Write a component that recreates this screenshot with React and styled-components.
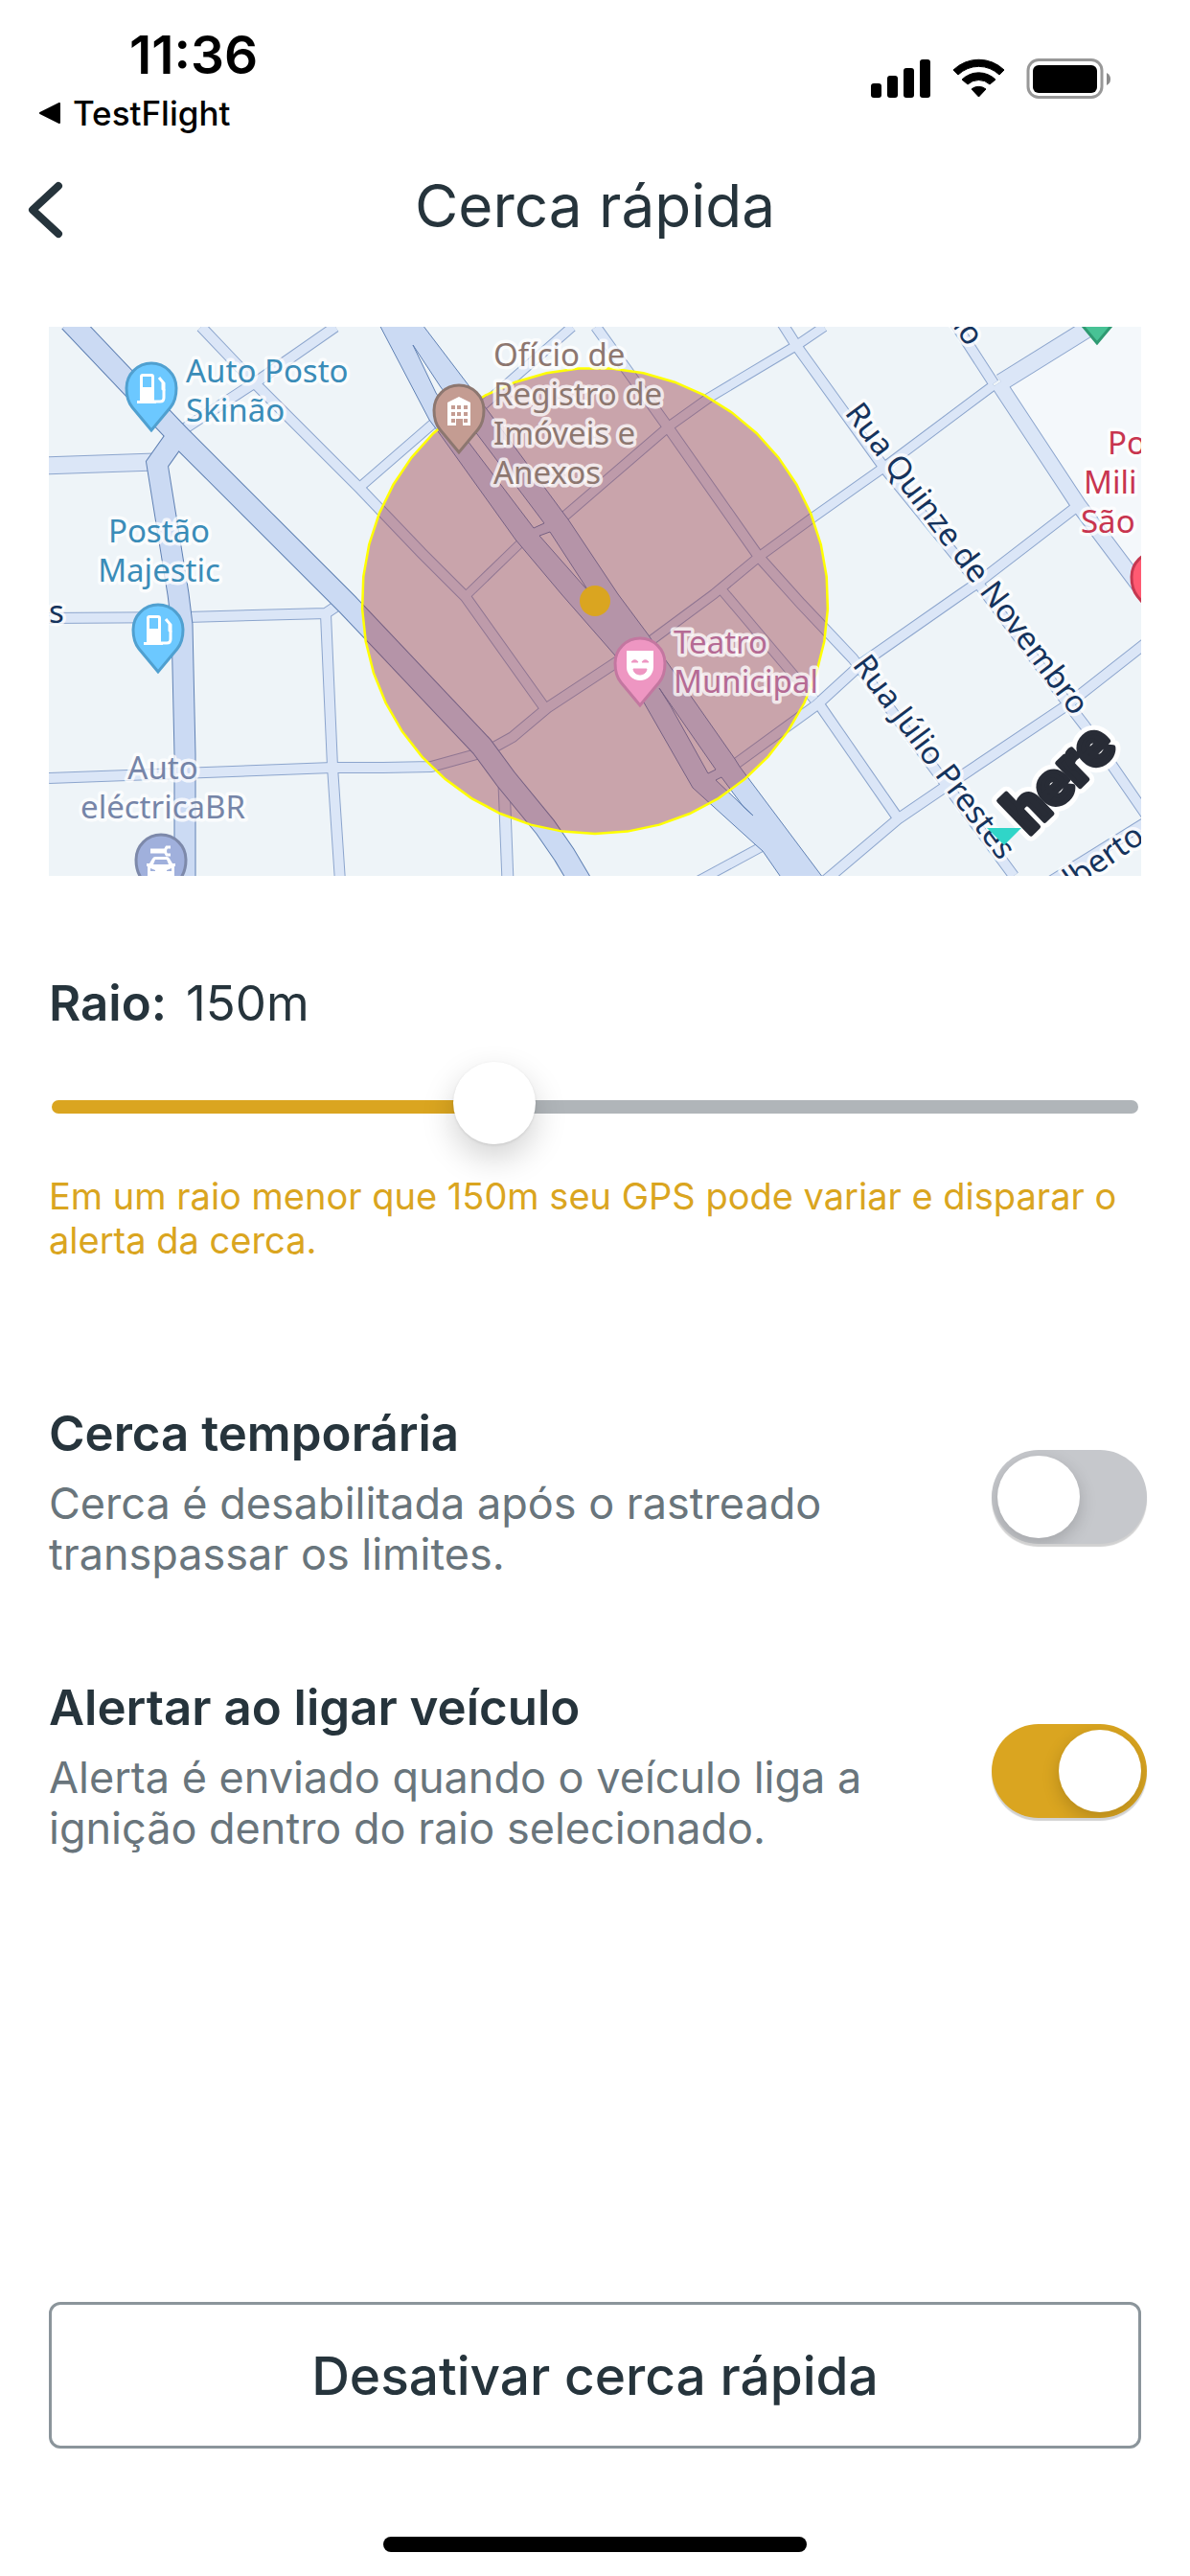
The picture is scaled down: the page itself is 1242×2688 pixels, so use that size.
import React, { useState } from "react";
import styled, { createGlobalStyle } from "styled-components";

const ink = "#26343c";
const gold = "#daa520";
const sans = `Inter, "Liberation Sans", sans-serif`;

const GlobalStyle = createGlobalStyle`
  * { box-sizing: border-box; }
  body { margin: 0; background: #fff; color: ${ink}; font-family: ${sans}; }
`;

const Screen = styled.div`
  display: flex;
  flex-direction: column;
  min-height: 100vh;
  padding-bottom: 25px;
`;

const StatusBar = styled.header`
  display: flex;
  justify-content: space-between;
  padding: 25px 83px 0 40px;
  color: #000;
`;

const StatusLeft = styled.div`
  display: flex;
  flex-direction: column;
  gap: 9px;
`;

const Clock = styled.time`
  padding-left: 95px;
  font-size: 55px;
  line-height: 64px;
  font-weight: 600;
`;

const ReturnLink = styled.a`
  display: flex;
  align-items: center;
  gap: 12px;
  color: inherit;
  font-size: 35px;
  line-height: 40px;
  font-weight: 500;
  text-decoration: none;
`;

const StatusIcons = styled.svg`
  width: 250px;
  height: 42px;
  margin-top: 36px;
`;

const NavBar = styled.nav`
  display: grid;
  grid-template-columns: 96px 1fr 96px;
  margin-top: 37px;
`;

const BackButton = styled.button`
  display: flex;
  align-items: center;
  align-self: end;
  height: 72px;
  padding: 0 0 0 28px;
  border: 0;
  background: none;
  color: ${ink};
`;

const Title = styled.h1`
  margin: 0;
  font-size: 62px;
  line-height: 80px;
  font-weight: 400;
  text-align: center;
`;

const Content = styled.main`
  display: flex;
  flex: 1;
  flex-direction: column;
  padding: 86px 51px 0;
`;

const MapView = styled.svg`
  display: block;
  width: 100%;
  height: auto;
  background: #eef4f8;
  font-family: "Noto Sans", "Open Sans", sans-serif;
`;

const RadiusField = styled.section`
  display: flex;
  flex-direction: column;
  margin-top: 101px;
`;

const RadiusLine = styled.div`
  display: flex;
  gap: 20px;
  margin-bottom: 29px;
  font-size: 51px;
  line-height: 64px;
`;

const RadiusLabel = styled.label`
  font-weight: 600;
`;

const Range = styled.input`
  appearance: none;
  height: 94px;
  margin: 0 3px;
  background: none;

  &::-webkit-slider-runnable-track {
    height: 14px;
    border-radius: 7px;
    background: linear-gradient(to right, ${gold} var(--filled), #b0b5b9 var(--filled));
  }

  &::-webkit-slider-thumb {
    appearance: none;
    width: 86px;
    height: 86px;
    margin-top: -40px;
    border-radius: 50%;
    background: #fff;
    box-shadow: 0 1px 3px rgba(0, 0, 0, 0.1), 0 14px 34px rgba(0, 0, 0, 0.18);
  }
`;

const Hint = styled.p`
  margin: 23px 0 0;
  color: ${gold};
  font-size: 38px;
  line-height: 46px;
`;

const Options = styled.section`
  display: flex;
  flex-direction: column;
  gap: 104px;
  margin: 149px -6px 80px 0;
`;

const Option = styled.div`
  display: flex;
  align-items: center;
  justify-content: space-between;
`;

const OptionText = styled.div`
  display: flex;
  flex-direction: column;
  gap: 16px;
  max-width: 860px;
`;

const OptionLabel = styled.label`
  font-size: 51px;
  line-height: 60px;
  font-weight: 600;
`;

const OptionNote = styled.p`
  margin: 0;
  color: #69757c;
  font-size: 45px;
  line-height: 53px;
`;

const Switch = styled.input`
  appearance: none;
  display: flex;
  flex-shrink: 0;
  width: 162px;
  height: 98px;
  margin: 10px 0 0;
  padding: 6px;
  overflow: hidden;
  border-radius: 49px;
  background: #c6c8cc;
  box-shadow: 0 3px 1px rgba(0, 0, 0, 0.18);

  &::before {
    content: "";
    width: 86px;
    height: 86px;
    border-radius: 50%;
    background: #fff;
    box-shadow: 0 6px 18px rgba(0, 0, 0, 0.18);
  }

  &:checked {
    justify-content: flex-end;
    background: ${gold};
  }
`;

const ActionButton = styled.button`
  height: 153px;
  margin-top: auto;
  border: 3px solid #8b959b;
  border-radius: 12px;
  background: #fff;
  color: ${ink};
  font-family: inherit;
  font-size: 55px;
  line-height: 66px;
  font-weight: 500;
`;

const HomeIndicator = styled.div`
  align-self: center;
  width: 442px;
  height: 16px;
  margin-top: 92px;
  border-radius: 8px;
  background: #000;
`;

const minorRoads = [
  { w: 10, p: "210,341 268,402 376,510 440,577 486,623 568,738" },
  { w: 10, p: "350,341 268,398 193,447" },
  { w: 9, p: "597,341 505,422 452,442 376,508" },
  { w: 10, p: "622,341 698,447 792,581 836,630 890,687 990,822 1058,914" },
  { w: 9, p: "860,341 832,360 740,415 698,445 590,538" },
  { w: 9, p: "680,668 745,620 792,581 847,541 922,488 1037,402" },
  { w: 9, p: "752,614 850,730" },
  { w: 10, p: "645,690 572,738 535,769 517,779 497,787 450,800 400,801 347,801 51,812" },
  { w: 10, p: "51,645 195,644 340,640 352,632" },
  { w: 10, p: "340,641 347,800 355,920" },
  { w: 11, p: "526,818 530,920" },
  { w: 10, p: "768,797 853,735 900,692 1003,620 1022,607 1122,530" },
  { w: 10, p: "855,735 938,855" },
  { w: 10, p: "860,920 938,854 988,820 1112,737 1196,671" },
  { w: 10, p: "815,335 832,362 922,487 1022,610 1115,735 1132,757 1196,850" },
  { w: 10, p: "995,335 1037,400" },
  { w: 9, p: "720,924 794,884" },
  { w: 10, p: "1080,930 1196,858" },
  { w: 8, p: "546,564 485,623" },
  { w: 17, p: "45,486 162,482" },
  { w: 17, p: "1148,335 1045,399" },
  { w: 15, p: "1042,400 1125,526 1200,626" },
];

const avenues = [
  { w: 22, p: "73,335 187,455 362,630 400,670 503,779 528,813 569,863 589,892 608,924" },
  { w: 21, p: "186,453 164,484 186,620 190,652 193,787 193,924" },
];

const boulevard =
  "M394 335 448 438 457 450 538 563 586 620 642 684 672 733 723 822 788 881 796 888 821 924 865 924 772 800 767 792 683 672 677 663 645 620 593 542 587 534 508 427 438 335Z";
const medians =
  "M431 360 460 404 498 453 568 546 557 551 488 460 455 410ZM563 559 574 555 615 618ZM688 718 747 803 739 807 700 737ZM747 814 753 811 776 842 786 851Z";

const fence = Array.from({ length: 45 }, (_, i) => {
  const a = (i / 45) * Math.PI * 2 + Math.PI / 2;
  return `${(621 + 243 * Math.cos(a)).toFixed(1)},${(627 + 243 * Math.sin(a)).toFixed(1)}`;
}).join(" ");

function Roads({ list, fill, edge }) {
  return (
    <g fill="none">
      {list.map((r) => (
        <polyline key={r.p} points={r.p} stroke={edge} strokeWidth={r.w + 2} />
      ))}
      {list.map((r) => (
        <polyline key={r.p} points={r.p} stroke={fill} strokeWidth={r.w} />
      ))}
    </g>
  );
}

function Pin({ x, y, fill, edge, children }) {
  return (
    <g transform={`translate(${x} ${y})`}>
      <path
        d="M0 44 -20 20C-24 15-26 8-26 0A26 26 0 0 1 26 0C26 8 24 15 20 20Z"
        fill={fill}
        stroke={edge}
        strokeWidth="3"
      />
      {children}
    </g>
  );
}

function FuelGlyph() {
  return (
    <g>
      <path
        fill="#fff"
        fillRule="evenodd"
        d="M-12-12q0-3 3-3h9q3 0 3 3v25h2v3h-20v-3h3ZM-9-12v11h9v-11Z"
      />
      <path d="M3 14h6q4 0 4-4V-5L8-11M12-6v7l2 2" fill="none" stroke="#fff" strokeWidth="3" />
    </g>
  );
}

function BuildingGlyph() {
  return (
    <path
      fill="#fff"
      fillRule="evenodd"
      d="M-12-8 0-14 12-8V16H4V9H-3V16H-12ZM-8-5v4h4v-4ZM-2-5v4h4v-4ZM5-5v4h4v-4ZM-8 2v4h4v-4ZM-2 2v4h4v-4ZM5 2v4h4v-4ZM-8 9v4h4v-4ZM5 9v4h4v-4Z"
    />
  );
}

function MaskGlyph() {
  return (
    <g>
      <path d="M-14-13h28V4a14 14 0 0 1-28 0Z" fill="#fff" />
      <path
        d="M-9-1a4 4.500 0 0 1 7 0ZM2-1a4 4.500 0 0 1 7 0ZM-7 6H7A7 6 0 0 1-7 6Z"
        fill="#ee96c2"
        stroke="#ee96c2"
      />
    </g>
  );
}

function CarServiceGlyph() {
  return (
    <g>
      <path d="M-11-9H6" stroke="#fff" strokeWidth="5" />
      <path d="M10-13H6q-3 4 0 8h4" fill="none" stroke="#fff" strokeWidth="3" />
      <path
        fill="#fff"
        fillRule="evenodd"
        d="M-9-1q1-2 3-2H6q2 0 3 2l3 5h3v3h-1V22h-28V7h-1V4h3ZM-6 0-8 5H8L6 0ZM-11 9v3h5v-1ZM11 9v3h-5v-1Z"
      />
    </g>
  );
}

function Label({ x, y, color, lines, anchor = "start", rotate = 0 }) {
  return (
    <text
      transform={`translate(${x} ${y}) rotate(${rotate})`}
      fill={color}
      stroke="#fff"
      strokeOpacity="0.75"
      strokeWidth="7"
      strokeLinejoin="round"
      paintOrder="stroke"
      fontSize="33"
      textAnchor={anchor}
    >
      {lines.map((line, i) => (
        <tspan key={line} x="0" y={i * 41}>
          {line}
        </tspan>
      ))}
    </text>
  );
}

function FenceMap() {
  return (
    <MapView viewBox="51 341 1140 573" role="img" aria-label="Mapa da cerca">
      <path d="M1150 341H1191V605L1048 403Z" fill="#f4f8fb" />
      <Roads list={minorRoads} fill="#dbe6f7" edge="#8ca5cd" />
      <Roads list={avenues} fill="#cbdaf3" edge="#5f80b3" />
      <path d={boulevard + medians} fill="#cbdaf3" fillRule="evenodd" stroke="#5f80b3" strokeWidth="1" />

      <polygon points={fence} fill="rgba(150, 52, 65, 0.42)" stroke="#ffff00" strokeWidth="2.500" />
      <circle cx="621" cy="627" r="16" fill={gold} />

      <Label x={881} y={431} rotate={53} color="#15335c" lines={["Rua Quinze de Novembro"]} />
      <Label x={889} y={694} rotate={53} color="#15335c" lines={["Rua Júlio Prestes"]} />
      <Label x={1010} y={363} rotate={54} anchor="end" color="#15335c" lines={["ão"]} />
      <Label x={1196} y={877} rotate={-35} anchor="end" color="#15335c" lines={["lberto"]} />
      <Label x={51} y={650} color="#15335c" lines={["s"]} />

      <Pin x={158} y={405} fill="#6cc8ff" edge="#50a0d0"><FuelGlyph /></Pin>
      <Pin x={165} y={657} fill="#6cc8ff" edge="#50a0d0"><FuelGlyph /></Pin>
      <Pin x={479} y={428} fill="#c49c92" edge="#8d7770"><BuildingGlyph /></Pin>
      <Pin x={668} y={692} fill="#ee96c2" edge="#c377a0"><MaskGlyph /></Pin>
      <Pin x={168} y={897} fill="#a0b0dc" edge="#7d89aa"><CarServiceGlyph /></Pin>
      <Pin x={1207} y={602} fill="#ff5a72" edge="#c53850" />
      <Pin x={1145} y={314} fill="#48c295" edge="#2f9a72" />

      <Label x={194} y={399} color="#3a8cb8" lines={["Auto Posto", "Skinão"]} />
      <Label x={166} y={566} anchor="middle" color="#3a8cb8" lines={["Postão", "Majestic"]} />
      <Label x={515} y={382} color="#8d7770" lines={["Ofício de", "Registro de", "Imóveis e", "Anexos"]} />
      <Label x={703} y={682} color="#b56a94" lines={["Teatro", "Municipal"]} />
      <Label x={170} y={813} anchor="middle" color="#7685a8" lines={["Auto", "eléctricaBR"]} />
      <Label x={1156} y={474} color="#c8354f" lines={["Po"]} />
      <Label x={1131} y={515} color="#c8354f" lines={["Mili"]} />
      <Label x={1128} y={556} color="#c8354f" lines={["São"]} />

      <g
        transform="translate(1074 872) rotate(-44)"
        fontFamily="Roboto, sans-serif"
        fontSize="64"
        fontWeight="900"
        fill="#282c36"
        strokeLinejoin="round"
      >
        <text stroke="#fff" strokeWidth="15" aria-hidden="true">here</text>
        <text stroke="#282c36" strokeWidth="5">here</text>
      </g>
      <path d="M1030 864h36l-18 18Z" fill="#30d5c8" />
    </MapView>
  );
}

function DeviceIcons() {
  return (
    <StatusIcons viewBox="0 0 250 42" aria-hidden="true">
      <rect x="0" y="26" width="11" height="15" rx="3" />
      <rect x="17" y="18" width="11" height="23" rx="3" />
      <rect x="34" y="10" width="11" height="31" rx="3" />
      <rect x="51" y="1" width="11" height="40" rx="3" />
      <path d="M86 12a38 38 0 0 1 53 0l-5 5a31 31 0 0 0-43 0Z" stroke="#000" strokeLinejoin="round" />
      <path d="M95 22a25 25 0 0 1 35 0l-6 5a17 17 0 0 0-23 0Z" stroke="#000" strokeLinejoin="round" />
      <path d="M105 32a12 12 0 0 1 15 0l-7.500 8Z" stroke="#000" strokeLinejoin="round" />
      <rect x="164" y="1.500" width="77" height="39" rx="11" fill="none" stroke="#989898" strokeWidth="3" />
      <rect x="169" y="7" width="67" height="29" rx="6" />
      <path d="M246 15q4 2 4 6.500t-4 6.500Z" fill="#8a8a8a" />
    </StatusIcons>
  );
}

function ToggleOption({ id, label, note, initial }) {
  const [on, setOn] = useState(initial);
  return (
    <Option>
      <OptionText>
        <OptionLabel htmlFor={id}>{label}</OptionLabel>
        <OptionNote>{note}</OptionNote>
      </OptionText>
      <Switch id={id} type="checkbox" role="switch" checked={on} onChange={(e) => setOn(e.target.checked)} />
    </Option>
  );
}

export default function App() {
  const [radius, setRadius] = useState(150);
  const filled = `${((radius - 50) / 250) * 100}%`;
  return (
    <Screen>
      <GlobalStyle />
      <StatusBar>
        <StatusLeft>
          <Clock>11:36</Clock>
          <ReturnLink href="#testflight">
            <svg width="24" height="22" viewBox="0 0 24 22" aria-hidden="true">
              <path d="M2 11 22 1V21Z" stroke="#000" strokeWidth="2" strokeLinejoin="round" />
            </svg>
            TestFlight
          </ReturnLink>
        </StatusLeft>
        <DeviceIcons />
      </StatusBar>

      <NavBar>
        <BackButton type="button" aria-label="Voltar">
          <svg width="40" height="60" viewBox="0 0 40 60" aria-hidden="true">
            <path d="M33 5 6 30 33 55" fill="none" stroke="currentColor" strokeWidth="8" strokeLinecap="round" strokeLinejoin="round" />
          </svg>
        </BackButton>
        <Title>Cerca rápida</Title>
      </NavBar>

      <Content>
        <FenceMap />

        <RadiusField>
          <RadiusLine>
            <RadiusLabel htmlFor="radius">Raio:</RadiusLabel>
            <output htmlFor="radius">{radius}m</output>
          </RadiusLine>
          <Range
            id="radius"
            type="range"
            min="50"
            max="300"
            step="10"
            value={radius}
            style={{ "--filled": filled }}
            onChange={(e) => setRadius(Number(e.target.value))}
          />
          <Hint>Em um raio menor que 150m seu GPS pode variar e disparar o alerta da cerca.</Hint>
        </RadiusField>

        <Options>
          <ToggleOption
            id="temporary"
            label="Cerca temporária"
            note="Cerca é desabilitada após o rastreado transpassar os limites."
            initial={false}
          />
          <ToggleOption
            id="ignition"
            label="Alertar ao ligar veículo"
            note="Alerta é enviado quando o veículo liga a ignição dentro do raio selecionado."
            initial={true}
          />
        </Options>

        <ActionButton type="button">Desativar cerca rápida</ActionButton>
      </Content>
      <HomeIndicator />
    </Screen>
  );
}
